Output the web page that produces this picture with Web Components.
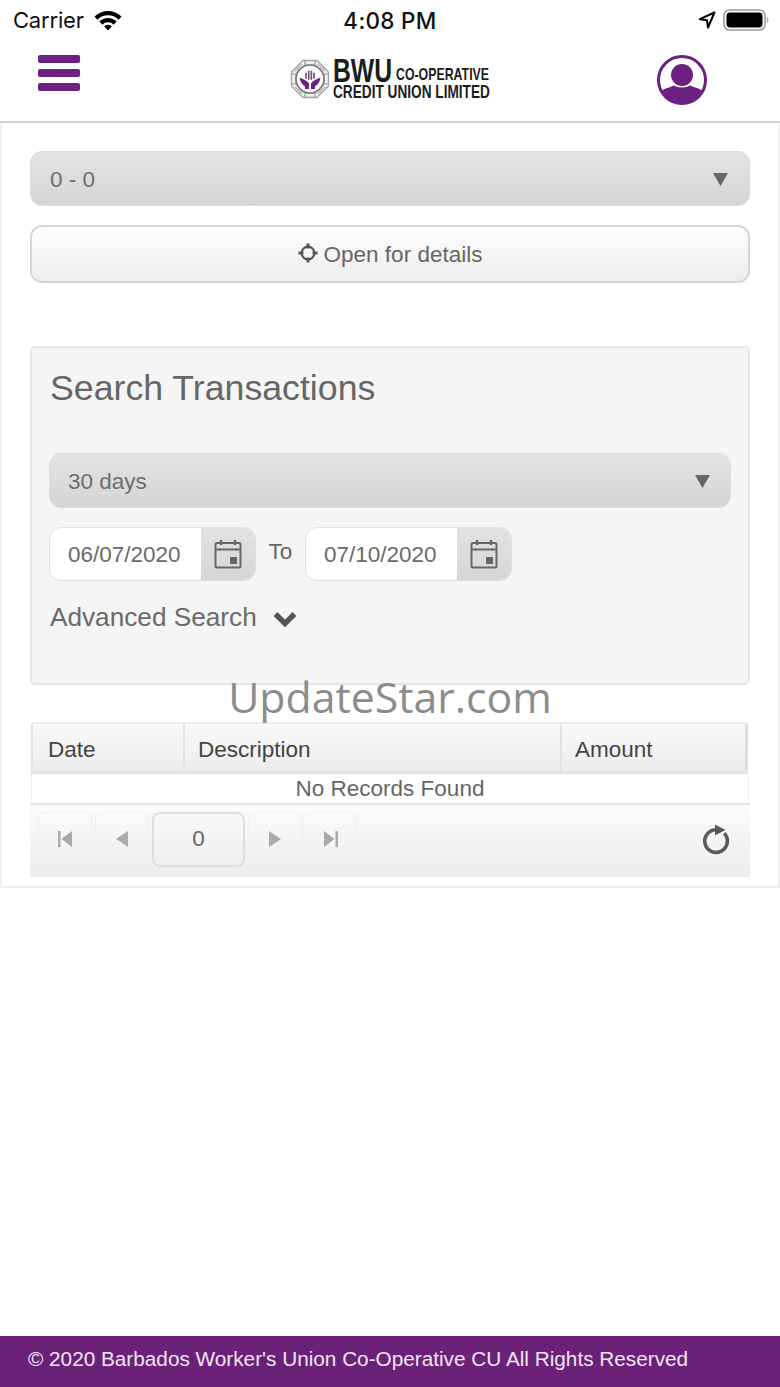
<!DOCTYPE html>
<html>
<head>
<meta charset="utf-8">
<style>
    html, body { margin: 0; padding: 0; background: #fff; }
    body { width: 780px; height: 1387px; position: relative; overflow: hidden; font-family: "Liberation Sans", Arial, sans-serif; color: #555; }
    #app { display: flex; flex-direction: column; height: 1387px; }
</style>
</head>
<body>
<div id="app">
    <status-bar></status-bar>
    <top-header></top-header>
    <main-panel>
        <select-box label="0 - 0"></select-box>
        <details-button>Open for details</details-button>
        <search-panel>
            <select-box label="30 days" slot="range"></select-box>
            <date-input slot="from" value="06/07/2020"></date-input>
            <date-input slot="to" value="07/10/2020"></date-input>
        </search-panel>
        <data-grid></data-grid>
    </main-panel>
    <page-footer>© 2020 Barbados Worker's Union Co-Operative CU All Rights Reserved</page-footer>
</div>
<water-mark>UpdateStar.com</water-mark>

<script>
class StatusBar extends HTMLElement {
    constructor() {
        super();
        this.attachShadow({ mode: 'open' });
    }

    connectedCallback() {
        this.shadowRoot.innerHTML = `
        <style>
            :host { display: block; height: 40px; }
            .bar { height: 40px; display: grid; grid-template-columns: 1fr auto 1fr; align-items: center; padding: 0 10px 0 13px; color: #111; font-family: Inter, "Liberation Sans", sans-serif; }
            .left { display: flex; align-items: center; gap: 10px; font-size: 22px; letter-spacing: -0.2px; }
            .time { font-size: 22.5px; font-weight: 500; letter-spacing: 0.3px; margin-left: -3px; }
            .right { display: flex; align-items: center; justify-content: flex-end; gap: 8px; }
            svg { display: block; }
        </style>
        <div class="bar">
            <div class="left">
                <span>Carrier</span>
                <svg width="28" height="21" viewBox="0 0 28 21">
                    <path d="M0.5 6.6 A19 19 0 0 1 27.5 6.6 L24.6 9.7 A15 15 0 0 0 3.4 9.7 Z M5.4 11.6 A12 12 0 0 1 22.6 11.6 L19.7 14.7 A7.8 7.8 0 0 0 8.3 14.7 Z M10.2 16.6 A5 5 0 0 1 17.8 16.6 L14 20.6 Z" fill="#000"/>
                </svg>
            </div>
            <div class="time">4:08 PM</div>
            <div class="right">
                <svg width="18" height="18" viewBox="0 0 18 18" style="margin-right:-1px">
                    <path d="M16.5 1.5 L1.8 8.2 L9 9.2 L10 16.5 Z" fill="none" stroke="#000" stroke-width="2" stroke-linejoin="round"/>
                </svg>
                <svg width="47" height="22" viewBox="0 0 47 22">
                    <rect x="1" y="1" width="41" height="20" rx="5.5" fill="none" stroke="#999" stroke-width="1.6"/>
                    <rect x="3.5" y="3.5" width="36" height="15" rx="3.4" fill="#000"/>
                    <path d="M43.8 8 C46 8.6 46 13.4 43.8 14 Z" fill="#aaa"/>
                </svg>
            </div>
        </div>`;
    }
}

class TopHeader extends HTMLElement {
    constructor() {
        super();
        this.attachShadow({ mode: 'open' });
    }

    connectedCallback() {
        this.shadowRoot.innerHTML = `
        <style>
            :host { display: block; }
            .head { height: 81px; border-bottom: 2px solid #dcc6d8; display: grid; grid-template-columns: 1fr auto 1fr; align-items: center; }
            .burger { margin-left: 38px; margin-top: -15px; width: 42px; display: flex; flex-direction: column; gap: 6.5px; }
            .burger i { display: block; height: 7.5px; border-radius: 2px; background: #6c2180; }
            .logo { display: flex; align-items: center; gap: 3px; margin-top: -3px; color: #1c1c1c; font-weight: 700; }
            .words { width: 157px; height: 42px; display: flex; flex-direction: column; }
            .l1 { height: 26px; display: flex; align-items: flex-end; }
            .l2 { height: 16px; display: flex; align-items: flex-end; }
            .fit { display: block; flex: none; height: 100%; }
            .fit span { display: block; white-space: nowrap; transform-origin: 0 100%; }
            .bwu { width: 63px; }
            .bwu span { font-size: 33px; line-height: 26px; transform: scaleX(.75); }
            .co { width: 94px; height: 18px; }
            .co span { font-size: 17px; line-height: 18px; transform: scaleX(.726); }
            .cu { width: 157px; }
            .cu span { font-size: 18px; line-height: 16px; transform: scaleX(.758); }
            .user { justify-self: end; margin-right: 73px; margin-top: -1px; display: block; }
            svg { display: block; }
        </style>
        <div class="head">
            <div class="burger"><i></i><i></i><i></i></div>
            <div class="logo">
                <svg width="40" height="40" viewBox="0 0 40 40">
                    <path d="M13 1.5 H27 L38.5 13 V27 L27 38.5 H13 L1.5 27 V13 Z" fill="#f1f1f1" stroke="#a5a5a5" stroke-width="1.4"/>
                    <path d="M15 1.5 V6 H25 V1.5 M15 38.5 V34 H25 V38.5 M1.5 15 H6 V25 H1.5 M38.5 15 H34 V25 H38.5" fill="none" stroke="#999" stroke-width="1.2"/>
                    <path d="M6 13 L13 6 M27 6 L34 13 M34 27 L27 34 M13 34 L6 27" stroke="#aaa" stroke-width="3.6"/>
                    <path d="M6 13 L13 6 M27 6 L34 13 M34 27 L27 34 M13 34 L6 27" stroke="#f4f4f4" stroke-width="1.4"/>
                    <circle cx="20" cy="20" r="14" fill="#fff" stroke="#777" stroke-width="1.6"/>
                    <path d="M9.5 18.5 L14 20.5 C16 21.5 18 22.5 19 24.5 V30 H15 V27.5 C12.5 26 10 22.5 9.5 18.5 Z M30.5 18.5 L26 20.5 C24 21.5 22 22.5 21 24.5 V30 H25 V27.5 C27.5 26 30 22.5 30.5 18.5 Z" fill="#6c2180"/>
                    <path d="M16 19 V14.5 M18.7 20 V12.5 M21.3 20 V12.5 M24 19 V14.5" stroke="#7a5c8c" stroke-width="1.8" stroke-linecap="round"/>
                </svg>
                <div class="words">
                    <div class="l1">
                        <div class="fit bwu"><span>BWU</span></div>
                        <div class="fit co"><span>CO-OPERATIVE</span></div>
                    </div>
                    <div class="l2"><div class="fit cu"><span>CREDIT UNION LIMITED</span></div></div>
                </div>
            </div>
            <svg class="user" width="50" height="50" viewBox="0 0 50 50">
                <defs><clipPath id="c"><circle cx="25" cy="25" r="23"/></clipPath></defs>
                <circle cx="25" cy="25" r="23.5" fill="#fff" stroke="#6c2180" stroke-width="3"/>
                <circle cx="25" cy="20" r="11" fill="#6c2180"/>
                <path d="M3 50 V38 C5 35 8 33.5 12 32.5 L17 30.5 C21 33 29 33 33 30.5 L38 32.5 C42 33.5 45 35 47 38 V50 Z" fill="#6c2180" clip-path="url(#c)"/>
            </svg>
        </div>`;
    }
}

class MainPanel extends HTMLElement {
    constructor() {
        super();
        this.attachShadow({ mode: 'open' });
    }

    connectedCallback() {
        this.shadowRoot.innerHTML = `
        <style>
            :host { display: block; flex: 1; }
            .panel { border: 2px solid #f0f0f0; border-top: 0; height: 765px; box-sizing: border-box; padding: 28px 28px 0 28px; }
        </style>
        <div class="panel"><slot></slot></div>`;
    }
}

class SelectBox extends HTMLElement {
    constructor() {
        super();
        this.attachShadow({ mode: 'open' });
    }

    connectedCallback() {
        this.shadowRoot.innerHTML = `
        <style>
            :host { display: block; }
            .sel { height: 55px; box-sizing: border-box; border: 1px solid #dcdcdc; border-radius: 12px; background: linear-gradient(#e4e4e4, #d4d4d4); display: flex; align-items: center; justify-content: space-between; padding: 2px var(--sel-pad-r, 21px) 0 var(--sel-pad-l, 19px); font-size: 22.5px; color: #6e6e6e; }
            svg { display: block; }
        </style>
        <div class="sel">
            <span>${this.getAttribute('label')}</span>
            <svg width="15" height="13" viewBox="0 0 15 13"><path d="M0 0 H15 L7.5 13 Z" fill="#666"/></svg>
        </div>`;
    }
}

class DetailsButton extends HTMLElement {
    constructor() {
        super();
        this.attachShadow({ mode: 'open' });
    }

    connectedCallback() {
        this.shadowRoot.innerHTML = `
        <style>
            :host { display: block; margin-top: 19px; }
            .btn { height: 58px; box-sizing: border-box; border: 2px solid #d6d6d6; border-radius: 12px; background: linear-gradient(#fdfdfd, #ededed); display: flex; align-items: center; justify-content: center; gap: 6px; padding-top: 2px; font-size: 22.5px; color: #666; }
            svg { display: block; margin-top: -4px; }
        </style>
        <div class="btn">
            <svg width="20" height="20" viewBox="0 0 20 20" fill="none" stroke="#555">
                <circle cx="10" cy="10" r="6.4" stroke-width="2.2"/>
                <path d="M10 0.5 V5.5 M10 14.5 V19.5 M0.5 10 H5.5 M14.5 10 H19.5" stroke-width="3"/>
            </svg>
            <span><slot></slot></span>
        </div>`;
    }
}

class DateInput extends HTMLElement {
    constructor() {
        super();
        this.attachShadow({ mode: 'open' });
    }

    connectedCallback() {
        this.shadowRoot.innerHTML = `
        <style>
            :host { display: block; }
            .wrap { width: 207px; height: 54px; box-sizing: border-box; border: 1px solid #e0e0e0; border-radius: 12px; overflow: hidden; display: flex; background: #fff; }
            .val { flex: 1; display: flex; align-items: center; padding: 2px 0 0 18px; font-size: 22.5px; color: #6a6a6a; }
            .btn { width: 54px; background: linear-gradient(#e2e2e2, #d6d6d6); display: flex; align-items: center; justify-content: center; }
            svg { display: block; }
        </style>
        <div class="wrap">
            <div class="val">${this.getAttribute('value')}</div>
            <div class="btn">
                <svg width="28" height="30" viewBox="0 0 28 30">
                    <rect x="1.5" y="4" width="25" height="24.5" rx="1.5" fill="none" stroke="#666" stroke-width="2"/>
                    <path d="M1.5 10.5 H26.5" stroke="#666" stroke-width="2"/>
                    <path d="M7 1 V6 M21 1 V6" stroke="#666" stroke-width="2.5"/>
                    <rect x="16" y="18" width="7" height="7" fill="#666"/>
                </svg>
            </div>
        </div>`;
    }
}

class SearchPanel extends HTMLElement {
    constructor() {
        super();
        this.attachShadow({ mode: 'open' });
    }

    connectedCallback() {
        this.shadowRoot.innerHTML = `
        <style>
            :host { display: block; margin-top: 63px; --sel-pad-l: 18px; --sel-pad-r: 20px; }
            .box { height: 339px; box-sizing: border-box; background: #f5f5f5; border: 2px solid #e6e6e6; border-radius: 5px; padding: 18px 17px 0 17px; }
            h2 { margin: 0 0 0 1px; font-size: 35.7px; line-height: 44px; font-weight: 400; color: #666; }
            .range { margin-top: 43px; }
            .dates { margin-top: 19px; display: flex; align-items: center; }
            .to { width: 49px; text-align: center; font-size: 22.5px; color: #666; margin-top: -4px; }
            .adv { margin: 17px 0 0 1px; display: flex; align-items: center; gap: 16px; font-size: 26.2px; line-height: 38px; color: #6a6a6a; }
            svg { display: block; margin-top: 3px; overflow: visible; }
        </style>
        <div class="box">
            <h2>Search Transactions</h2>
            <div class="range"><slot name="range"></slot></div>
            <div class="dates">
                <slot name="from"></slot>
                <div class="to">To</div>
                <slot name="to"></slot>
            </div>
            <div class="adv">
                <span>Advanced Search</span>
                <svg width="24" height="16" viewBox="0 0 24 16"><path d="M2.5 3 L12 12.5 L21.5 3" fill="none" stroke="#555" stroke-width="5.4"/></svg>
            </div>
        </div>`;
    }
}

class DataGrid extends HTMLElement {
    constructor() {
        super();
        this.attachShadow({ mode: 'open' });
    }

    connectedCallback() {
        this.shadowRoot.innerHTML = `
        <style>
            :host { display: block; margin-top: 37px; font-size: 22.5px; }
            .head { display: grid; grid-template-columns: 152px 377px 188px; height: 52px; margin-left: 1px; width: 717px; box-sizing: border-box; border-top: 2px solid #ececec; border-bottom: 3px solid #e4e4e4; background: linear-gradient(#fafafa, #ececec); color: #444; }
            .head div { display: flex; align-items: center; padding: 4px 0 0 13px; border-left: 2px solid #e2e2e2; }
            .head div:first-child { padding-left: 15px; }
            .head div:last-child { border-right: 3px solid #ddd; }
            .row { height: 29px; margin-left: 1px; width: 718px; box-sizing: border-box; border-left: 1px solid #eee; border-right: 1px solid #eee; text-align: center; line-height: 29px; color: #666; background: #fff; }
            .pager { height: 74px; box-sizing: border-box; border-top: 2px solid #e4e4e4; background: linear-gradient(#fbfbfb, #ececec); display: flex; align-items: center; padding: 0 19px 2px 8px; }
            .nav { width: 54px; height: 54px; box-sizing: border-box; border: 1px solid #f0f0f0; border-radius: 6px; display: flex; align-items: center; justify-content: center; margin-right: 3px; margin-top: -2px; }
            .page { width: 93px; height: 55px; margin: -2px 3px 0 0; box-sizing: border-box; border: 2px solid #dedede; border-radius: 8px; background: linear-gradient(#f8f8f8, #efefef); display: flex; align-items: center; justify-content: center; color: #666; }
            .nav.last { margin-left: -2px; }
            .refresh { margin-left: auto; display: block; }
            svg { display: block; }
        </style>
        <div class="head">
            <div>Date</div>
            <div>Description</div>
            <div>Amount</div>
        </div>
        <div class="row">No Records Found</div>
        <div class="pager">
            <div class="nav"><svg width="15" height="16" viewBox="0 0 15 16" fill="#aaa"><rect x="0" y="0" width="2.5" height="16"/><path d="M14 0 V16 L3.5 8 Z"/></svg></div>
            <div class="nav"><svg width="12" height="16" viewBox="0 0 12 16" fill="#aaa"><path d="M12 0 V16 L0 8 Z"/></svg></div>
            <div class="page">0</div>
            <div class="nav"><svg width="12" height="16" viewBox="0 0 12 16" fill="#aaa"><path d="M0 0 V16 L12 8 Z"/></svg></div>
            <div class="nav last"><svg width="15" height="16" viewBox="0 0 15 16" fill="#aaa"><path d="M1 0 V16 L11.5 8 Z"/><rect x="12.5" y="0" width="2.5" height="16"/></svg></div>
            <svg class="refresh" width="30" height="34" viewBox="0 0 30 34">
                <path d="M16 6.8 A11.3 11.3 0 1 0 23.2 10.2" fill="none" stroke="#5a5a5a" stroke-width="3.6"/>
                <path d="M14 1.5 L24.5 7 L14 12.5 Z" fill="#5a5a5a"/>
            </svg>
        </div>`;
    }
}

class PageFooter extends HTMLElement {
    constructor() {
        super();
        this.attachShadow({ mode: 'open' });
    }

    connectedCallback() {
        this.shadowRoot.innerHTML = `
        <style>
            :host { display: block; margin-top: auto; }
            .foot { height: 51px; box-sizing: border-box; padding: 0 0 6px 28px; background: #6c2178; color: #f0e6f2; display: flex; align-items: center; font-size: 20.75px; }
        </style>
        <div class="foot"><slot></slot></div>`;
    }
}

// filigrane par-dessus la page
class WaterMark extends HTMLElement {
    constructor() {
        super();
        this.attachShadow({ mode: 'open' });
    }

    connectedCallback() {
        this.shadowRoot.innerHTML = `
        <style>
            :host { display: block; position: absolute; left: 0; right: 0; top: 667px; text-align: center; font-family: "Open Sans", sans-serif; font-size: 42.8px; line-height: 60px; color: #8c8c8c; pointer-events: none; }
        </style>
        <slot></slot>`;
    }
}

customElements.define('status-bar', StatusBar);
customElements.define('top-header', TopHeader);
customElements.define('main-panel', MainPanel);
customElements.define('select-box', SelectBox);
customElements.define('details-button', DetailsButton);
customElements.define('date-input', DateInput);
customElements.define('search-panel', SearchPanel);
customElements.define('data-grid', DataGrid);
customElements.define('page-footer', PageFooter);
customElements.define('water-mark', WaterMark);
</script>
</body>
</html>
